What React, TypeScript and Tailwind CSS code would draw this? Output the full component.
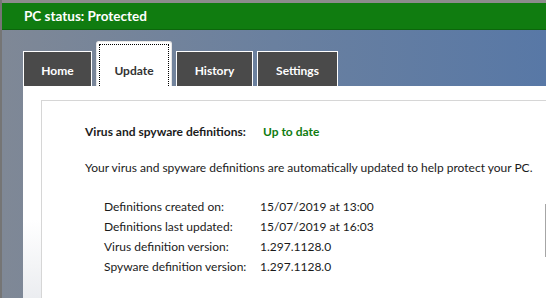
import React from "react";

const rows = [
  ["Definitions created on:", "15/07/2019 at 13:00"],
  ["Definitions last updated:", "15/07/2019 at 16:03"],
  ["Virus definition version:", "1.297.1128.0"],
  ["Spyware definition version:", "1.297.1128.0"],
];

function Tab({ label, active, width }: { label: string; active?: boolean; width: string }) {
  if (active) {
    return (
      <div className={`${width} h-[45px] bg-white rounded-t-[3px] border border-b-0 border-[#e6e6e6] p-[2px] pb-0`}>
        <div className="w-full h-full border border-dotted border-black border-b-0 flex items-center justify-center pt-[10px] text-[#333] font-bold">
          {label}
        </div>
      </div>
    );
  }
  return (
    <div className={`${width} h-[35px] bg-[#4a4a4a] border border-b-0 border-white flex items-center justify-center pt-[4px] text-white font-bold`}>
      {label}
    </div>
  );
}

export default function App() {
  return (
    <div
      className="w-[546px] h-[298px] overflow-hidden relative bg-[#8c8c8c] border-l-2 border-[#757575] text-[12px] text-[#1b1b1b] whitespace-nowrap"
      style={{ fontFamily: 'Lato, "Open Sans", Arial, sans-serif' }}
    >
      <div className="h-[3px]" />
      <div className="h-[27px] bg-[#107c10] border-b border-[#0c660c] flex items-center pl-[22px] text-white font-bold text-[13.5px]">
        PC status: Protected
      </div>
      <div className="h-full bg-[linear-gradient(to_right,#7f8896,#6a809f_50%,#5878a6)] pl-[21px]">
        <div className="h-[56px] flex items-end gap-[4px]">
          <Tab label="Home" width="w-[69px]" />
          <Tab label="Update" width="w-[76px]" active />
          <Tab label="History" width="w-[77px]" />
          <Tab label="Settings" width="w-[81px]" />
        </div>
        <div className="h-full bg-[linear-gradient(to_bottom,#ffffff_45%,#e8eaee_75%)] pt-[14px] pl-[18px]">
          <div className="h-full bg-white border-t border-l border-[#d6d6d6] pl-[43px] pt-[21px] leading-[20px]">
            <div className="flex">
              <span className="w-[178px] font-bold">Virus and spyware definitions:</span>
              <span className="font-bold text-[#107c10]">Up to date</span>
            </div>
            <div className="mt-[16px]">
              Your virus and spyware definitions are automatically updated to help protect your PC.
            </div>
            <div className="mt-[19px] pl-[19px] grid grid-cols-[156px_auto]">
              {rows.map(([k, v]) => (
                <React.Fragment key={k}>
                  <span>{k}</span>
                  <span>{v}</span>
                </React.Fragment>
              ))}
            </div>
          </div>
        </div>
      </div>
      <div className="absolute left-[543px] top-[204px] w-[1px] h-[53px] bg-[#a6a6a6]" />
    </div>
  );
}
